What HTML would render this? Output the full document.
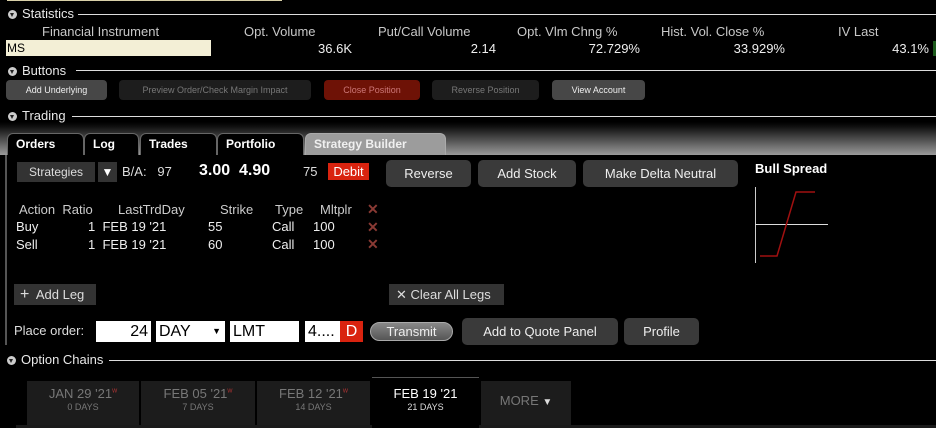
<!DOCTYPE html>
<html><head><meta charset="utf-8"><style>
*{margin:0;padding:0;box-sizing:border-box}
body{width:936px;height:428px;background:#000;position:relative;overflow:hidden;font-family:"Liberation Sans",sans-serif;color:#ddd}
.a{position:absolute;white-space:nowrap}
.hd{font-size:13px;color:#e8e8e8}
.tri{position:absolute;width:9px;height:9px;border-radius:50%;background:#ccc}
.tri:after{content:"";position:absolute;left:2px;top:3px;border-left:2.5px solid transparent;border-right:2.5px solid transparent;border-top:4px solid #222}
.ln{position:absolute;height:1px;background:#ddd}
.ch{font-size:13px;color:#c8c8c8}
.v{font-size:13px;color:#eee;text-align:right}
.sb{position:absolute;height:20px;border-radius:4px;font-size:9px;text-align:center;line-height:20px}
.tab{position:absolute;top:133px;height:22px;background:#000;border:1px solid #666;border-bottom:none;border-radius:6px 6px 0 0;color:#fff;font-weight:bold;font-size:12px;padding:3px 0 0 8px}
.bt{position:absolute;background:#3a3a3a;border-radius:5px;color:#eee;font-size:13px;text-align:center}
.in{position:absolute;background:#fff;color:#000;font-size:16px;height:21px;line-height:21px}
.ct{position:absolute;top:381px;height:44px;background:#1c1c1c;text-align:center;color:#777;font-size:13px;padding-top:5px}
.ct small{display:block;font-size:9px;margin-top:1px}
.ct sup{color:#a33;font-size:7px}
</style></head><body>
<div class="a" style="left:7px;top:0;width:275px;height:1px;background:#d8d0a8"></div>

<div class="tri" style="left:8px;top:10px"></div><div class="a hd" style="left:22px;top:6px">Statistics</div><div class="ln" style="left:78px;right:0;top:14px"></div>
<div class="a ch" style="left:42px;top:24px">Financial Instrument</div>
<div class="a ch" style="left:244px;top:24px">Opt. Volume</div>
<div class="a ch" style="left:378px;top:24px">Put/Call Volume</div>
<div class="a ch" style="left:517px;top:24px">Opt. Vlm Chng %</div>
<div class="a ch" style="left:661px;top:24px">Hist. Vol. Close %</div>
<div class="a ch" style="left:838px;top:24px">IV Last</div>
<div class="a" style="left:6px;top:40px;width:205px;height:16px;background:#f3efd6;color:#000;font-size:12px;line-height:16px;padding-left:1px">MS</div>
<div class="a v" style="right:584px;top:41px">36.6K</div>
<div class="a v" style="right:440px;top:41px">2.14</div>
<div class="a v" style="right:296px;top:41px">72.729%</div>
<div class="a v" style="right:151px;top:41px">33.929%</div>
<div class="a v" style="right:7px;top:41px">43.1%</div>
<div class="a" style="left:933px;top:41px;width:3px;height:15px;background:#1c5a1c"></div>

<div class="tri" style="left:8px;top:67px"></div><div class="a hd" style="left:22px;top:63px">Buttons</div><div class="ln" style="left:76px;right:0;top:70px"></div>
<div class="sb" style="left:6px;top:80px;width:101px;background:#474747;color:#eee">Add Underlying</div>
<div class="sb" style="left:119px;top:80px;width:192px;background:#1d1d1d;color:#777">Preview Order/Check Margin Impact</div>
<div class="sb" style="left:324px;top:80px;width:96px;background:#6e1206;color:#c77">Close Position</div>
<div class="sb" style="left:432px;top:80px;width:107px;background:#1d1d1d;color:#777">Reverse Position</div>
<div class="sb" style="left:552px;top:80px;width:93px;background:#474747;color:#eee">View Account</div>

<div class="a" style="left:0;top:122px;width:936px;height:33px;background:linear-gradient(#000,#111 15%,#9a9a9a)"></div>
<div class="tri" style="left:8px;top:112px"></div><div class="a hd" style="left:22px;top:108px">Trading</div><div class="ln" style="left:72px;right:0;top:116px"></div>
<div class="tab" style="left:7px;width:77px">Orders</div>
<div class="tab" style="left:84px;width:55px">Log</div>
<div class="tab" style="left:140px;width:77px">Trades</div>
<div class="tab" style="left:217px;width:87px">Portfolio</div>
<div class="tab" style="left:305px;width:141px;background:#9c9c9c;border-color:#aaa;color:#f0f0f0">Strategy Builder</div>
<div class="a" style="left:5px;top:155px;width:2px;height:190px;background:#555"></div>

<div class="a" style="left:17px;top:162px;width:78px;height:20px;background:#333;color:#ddd;font-size:12px;line-height:20px;text-align:center">Strategies</div>
<div class="a" style="left:98px;top:162px;width:19px;height:20px;background:#333;color:#fff;font-size:12px;line-height:20px;text-align:center">▼</div>
<div class="a" style="left:122px;top:164px;font-size:13px;color:#ddd">B/A:&nbsp;&nbsp;&nbsp;97</div>
<div class="a" style="left:199px;top:162px;font-size:16px;font-weight:bold;color:#fff">3.00&nbsp;&nbsp;4.90</div>
<div class="a" style="left:303px;top:164px;font-size:13px;color:#ddd">75</div>
<div class="a" style="left:328px;top:163px;width:41px;height:17px;background:#d9230f;color:#fff;font-size:13px;line-height:17px;text-align:center">Debit</div>
<div class="bt" style="left:386px;top:160px;width:85px;height:27px;line-height:27px">Reverse</div>
<div class="bt" style="left:478px;top:160px;width:98px;height:27px;line-height:27px">Add Stock</div>
<div class="bt" style="left:583px;top:160px;width:155px;height:27px;line-height:27px">Make Delta Neutral</div>
<div class="a" style="left:755px;top:161px;font-size:13px;font-weight:bold;color:#fff">Bull Spread</div>
<svg class="a" style="left:750px;top:185px" width="80" height="80"><line x1="5.5" y1="2" x2="5.5" y2="78" stroke="#ccc"/><line x1="5" y1="39.5" x2="78" y2="39.5" stroke="#ddd"/><polyline points="10,71 27,71 46,7 65,7" fill="none" stroke="#a01010" stroke-width="1.5"/></svg>

<div class="a" style="left:19px;top:202px;font-size:13px;color:#ccc">Action&nbsp; Ratio</div>
<div class="a" style="left:118px;top:202px;font-size:13px;color:#ccc">LastTrdDay</div>
<div class="a" style="left:220px;top:202px;font-size:13px;color:#ccc">Strike</div>
<div class="a" style="left:275px;top:202px;font-size:13px;color:#ccc">Type</div>
<div class="a" style="left:320px;top:202px;font-size:13px;color:#ccc">Mltplr</div>
<div class="a" style="left:16px;top:218px;font-size:13px;color:#eee;line-height:17.5px">Buy<br>Sell</div>
<div class="a" style="left:88px;top:218px;font-size:13px;color:#eee;line-height:17.5px">1&nbsp; FEB 19 '21<br>1&nbsp; FEB 19 '21</div>
<div class="a" style="left:208px;top:218px;font-size:13px;color:#eee;line-height:17.5px">55<br>60</div>
<div class="a" style="left:272px;top:218px;font-size:13px;color:#eee;line-height:17.5px">Call<br>Call</div>
<div class="a" style="left:313px;top:218px;font-size:13px;color:#eee;line-height:17.5px">100<br>100</div>
<div class="a" style="left:367px;top:201px;font-size:14px;font-weight:bold;color:#8a3a34;line-height:17.5px">✕<br>✕<br>✕</div>

<div class="a" style="left:14px;top:284px;width:82px;height:21px;background:#333;color:#ddd;font-size:13px;line-height:21px;padding-left:6px"><span style="font-size:16px">+</span>&nbsp; Add Leg</div>
<div class="a" style="left:389px;top:284px;width:115px;height:21px;background:#333;color:#ddd;font-size:13px;line-height:21px;padding-left:7px">✕ Clear All Legs</div>

<div class="a" style="left:14px;top:323px;font-size:13px;color:#ddd">Place order:</div>
<div class="in" style="left:96px;top:321px;width:55px;text-align:right;padding-right:3px">24</div>
<div class="in" style="left:156px;top:321px;width:69px;padding-left:3px">DAY<span style="position:absolute;right:4px;font-size:9px">▼</span></div>
<div class="in" style="left:230px;top:321px;width:69px;padding-left:3px">LMT</div>
<div class="in" style="left:305px;top:321px;width:36px;padding-left:3px">4....</div>
<div class="in" style="left:340px;top:321px;width:23px;background:#d9230f;color:#fff;text-align:center">D</div>
<div class="a" style="left:370px;top:322px;width:83px;height:19px;border-radius:10px;background:linear-gradient(#888,#555);border:1px solid #aaa;color:#eee;font-size:13px;line-height:17px;text-align:center">Transmit</div>
<div class="bt" style="left:462px;top:318px;width:156px;height:27px;line-height:27px">Add to Quote Panel</div>
<div class="bt" style="left:624px;top:318px;width:75px;height:27px;line-height:27px">Profile</div>

<div class="tri" style="left:7px;top:356px"></div><div class="a hd" style="left:21px;top:352px">Option Chains</div><div class="ln" style="left:109px;right:0;top:360px"></div>
<div class="a" style="left:16px;top:425px;width:920px;height:3px;background:#1a1a1a"></div>
<div class="ct" style="left:27px;width:112px">JAN 29 '21<sup>w</sup><small>0 DAYS</small></div>
<div class="ct" style="left:141px;width:114px">FEB 05 '21<sup>w</sup><small>7 DAYS</small></div>
<div class="ct" style="left:257px;width:113px">FEB 12 '21<sup>w</sup><small>14 DAYS</small></div>
<div class="ct" style="left:372px;width:107px;top:377px;height:51px;background:#000;border-top:1px solid #555;color:#fff;padding-top:8px">FEB 19 '21<small style="color:#ddd">21 DAYS</small></div>
<div class="ct" style="left:481px;width:90px;padding-top:12px">MORE <span style="font-size:10px;color:#ddd">▼</span></div>
</body></html>
